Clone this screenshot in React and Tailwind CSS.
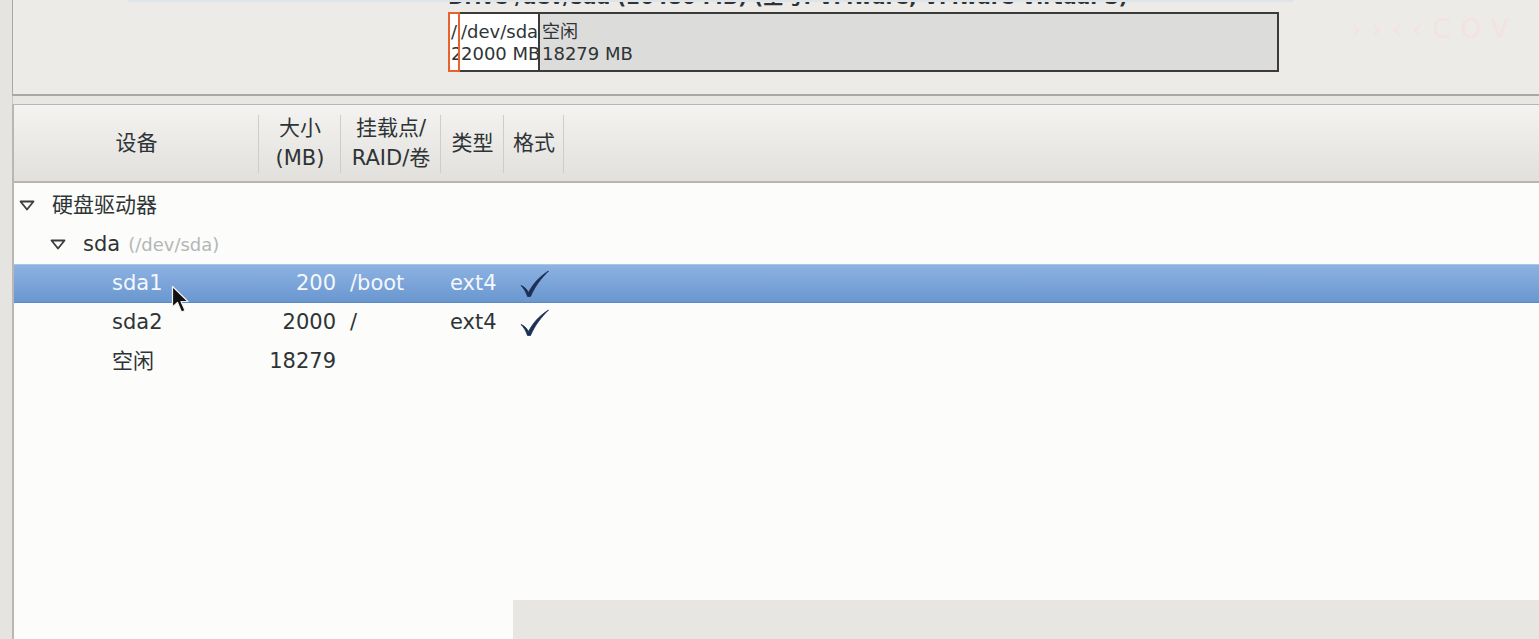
import React from "react";

const font = { fontFamily: '"DejaVu Sans", "Noto Sans CJK SC", sans-serif' };

function Tri() {
  return (
    <svg width="16" height="11" viewBox="0 0 16 11" className="shrink-0">
      <path d="M1.5 1.5 L14.5 1.5 L8 9.5 Z" fill="none" stroke="#3a3d3f" strokeWidth="1.8" strokeLinejoin="round" />
    </svg>
  );
}

function Check() {
  return (
    <svg width="30" height="28" viewBox="0 0 30 28">
      <path d="M1 15.5 C4 16.5 6.5 19 8.5 22.5 C13 14 19 7 28.5 1 C21 8.5 15 16 10.5 26.5 L7.5 26.5 C6 22 4 18.5 1 15.5 Z" fill="#1d2f56" stroke="#1d2f56" strokeWidth="0.8" strokeLinejoin="round" />
    </svg>
  );
}

function Cursor() {
  return (
    <svg width="22" height="32" viewBox="0 0 22 32" className="absolute left-[171px] top-[285px]">
      <path d="M1.5 1.5 L1.5 22 L6.5 17.5 L10.5 27 L14 25.5 L10 16.5 L17 16.5 Z" fill="#111" stroke="#f2f2f2" strokeWidth="1.2" strokeLinejoin="round" />
    </svg>
  );
}

function HeaderCell({ w, children }) {
  return (
    <div className={`${w} h-full flex items-center relative`}>
      <div className="flex-1 text-center text-[21px] leading-[30px] text-[#2e3436] whitespace-nowrap">{children}</div>
      <div className="absolute right-0 top-[10px] bottom-[8px] w-px bg-[#cfcdc8]" />
    </div>
  );
}

function Row({ selected, indent, tri, name, sub, size, mount, type, fmt }) {
  const color = selected ? "text-[#f4f7fb]" : "text-[#2e3436]";
  return (
    <div
      className={`h-[39px] flex items-center text-[21px] whitespace-nowrap ${color} ${
        selected ? "bg-gradient-to-b from-[#8db2e2] to-[#6a97d0] border-t border-[#a9c5ea] border-b border-b-[#5d89c2]" : ""
      }`}
    >
      <div className="w-[245px] flex items-center" style={{ paddingLeft: indent }}>
        {tri && <span className="mr-[17px]"><Tri /></span>}
        <span>{name}</span>
        {sub && <span className="ml-[8px] text-[18px] text-[#b3b6b6]">{sub}</span>}
      </div>
      <div className="w-[82px] text-right pr-[5px]">{size}</div>
      <div className="w-[100px] pl-[9px]">{mount}</div>
      <div className="w-[63px] pl-[9px]">{type}</div>
      <div className="w-[60px] pl-[16px] flex items-center">{fmt && <Check />}</div>
    </div>
  );
}

export default function App() {
  return (
    <div className="w-[1539px] h-[639px] overflow-hidden relative bg-[#e7e5e2] flex" style={font}>
      <div className="w-[12px] shrink-0 bg-[#e6e4e1]" />
      <div className="flex-1 flex flex-col min-w-0">
        {/* top panel */}
        <div className="h-[96px] shrink-0 bg-[#ecebe8] border-l border-b-2 border-[#aaa8a4] relative flex flex-col pl-[435px]">
          <div className="absolute left-[115px] top-0 w-[1165px] h-[2px] bg-[#dfe4ea]" />
          <div className="-mt-[14px] h-[22px] leading-[22px] text-[20px] font-bold text-[#2e3436] whitespace-nowrap">
            Drive /dev/sda (20480 MB) (型号: VMware, VMware Virtual S)
          </div>
          <div className="mt-[4px] w-[831px] h-[60px] flex text-[18px] leading-[22px] text-[#2e3436]">
            <div className="w-[12px] h-full border-2 border-[#e8622e] bg-white overflow-hidden pt-[7px] pl-[1px] whitespace-nowrap">
              <div>/</div>
              <div>2</div>
            </div>
            <div className="w-[80px] h-full border-y-2 border-r-2 border-[#3b3b3b] bg-white overflow-hidden pt-[7px] pl-[1px] whitespace-nowrap">
              <div>/dev/sda2</div>
              <div>2000 MB</div>
            </div>
            <div className="flex-1 h-full border-y-2 border-r-2 border-[#3b3b3b] bg-[#dcdcdb] pt-[7px] pl-[2px] whitespace-nowrap">
              <div>空闲</div>
              <div>18279 MB</div>
            </div>
          </div>
          <div className="absolute left-[1338px] top-[10px] text-[26px] tracking-[10px] text-[#f4e2e2]">››‹‹COV</div>
        </div>
        <div className="h-[8px] shrink-0 bg-[#e9e7e4] border-l border-[#c9c7c3]" />
        {/* table */}
        <div className="flex-1 flex flex-col border-l-2 border-t border-[#b9b7b3] bg-[#fcfcfa]">
          <div className="h-[78px] shrink-0 flex bg-gradient-to-b from-[#f4f3f1] to-[#e2e0dc] border-b-2 border-[#b7b5b0]">
            <HeaderCell w="w-[245px]">设备</HeaderCell>
            <HeaderCell w="w-[82px]">
              大小
              <br />
              (MB)
            </HeaderCell>
            <HeaderCell w="w-[100px]">
              挂载点/
              <br />
              RAID/卷
            </HeaderCell>
            <HeaderCell w="w-[63px]">类型</HeaderCell>
            <HeaderCell w="w-[60px]">格式</HeaderCell>
          </div>
          <div className="pt-[3px]">
            <Row indent="5px" tri name="硬盘驱动器" />
            <Row indent="36px" tri name="sda" sub="(/dev/sda)" />
            <Row selected indent="98px" name="sda1" size="200" mount="/boot" type="ext4" fmt />
            <Row indent="98px" name="sda2" size="2000" mount="/" type="ext4" fmt />
            <Row indent="98px" name="空闲" size="18279" />
          </div>
        </div>
      </div>
      <div className="absolute left-[513px] top-[600px] w-[1026px] h-[39px] bg-[#e8e6e2]" />
      <Cursor />
    </div>
  );
}
